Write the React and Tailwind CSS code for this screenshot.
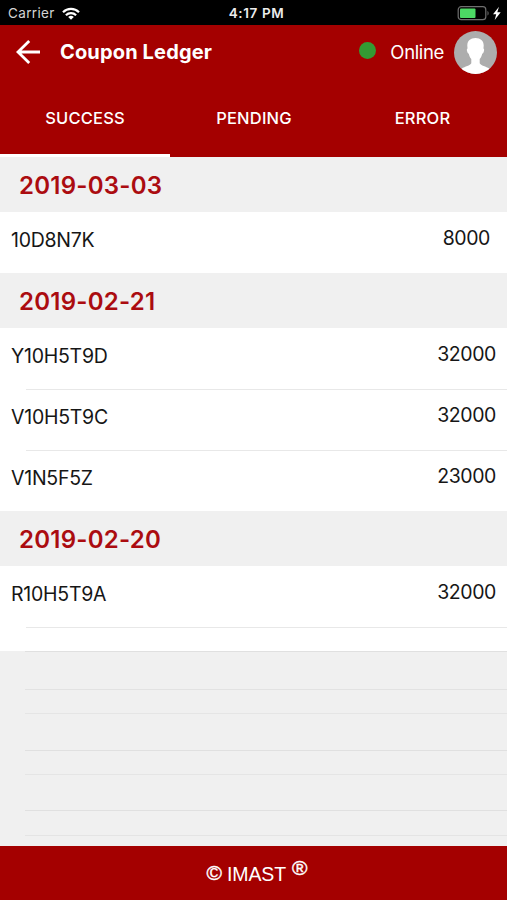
const groups = [
  { date: '2019-03-03', items: [{ code: '10D8N7K', points: 8000 }] },
  {
    date: '2019-02-21',
    items: [
      { code: 'Y10H5T9D', points: 32000 },
      { code: 'V10H5T9C', points: 32000 },
      { code: 'V1N5F5Z', points: 23000 },
    ],
  },
  { date: '2019-02-20', items: [{ code: 'R10H5T9A', points: 32000 }] },
]

const tabs = ['SUCCESS', 'PENDING', 'ERROR']

function StatusBar() {
  return (
    <div className="h-[25px] shrink-0 bg-black text-white grid grid-cols-3 items-center pl-2 pr-1 pt-[3px]">
      <div className="flex items-center gap-[7px]">
        <span className="text-[13.5px] leading-none tracking-[0.35px] text-[#d4d4d4]">Carrier</span>
        <svg width="18" height="13" viewBox="0 0 18 13" fill="none" stroke="#fff" strokeWidth="2.2" className="-mt-0.5">
          <path d="M1 5.200a11.300 11.300 0 0 1 16 0" />
          <path d="M3.900 8.200a7.200 7.200 0 0 1 10.200 0" />
          <path d="M6.200 10a4 4 0 0 1 5.600 0L9 12.800z" fill="#fff" stroke="none" />
        </svg>
      </div>
      <div className="pl-0.5 text-center text-[13.5px] leading-none font-semibold tracking-[0.6px] text-[#ececec]">4:17 PM</div>
      <div className="flex justify-end">
        <svg width="46" height="16" viewBox="0 0 46 16" className="-mt-[3px]">
          <rect x="1.200" y="1.700" width="27.600" height="13" rx="3" fill="none" stroke="#6f6f6f" strokeWidth="1.200" />
          <rect x="3" y="3.500" width="15.500" height="9.400" rx="1" fill="#4cd964" />
          <path d="M30.500 6v4.600c1.500-.6 1.500-4 0-4.600z" fill="#6f6f6f" />
          <path d="M42 1.800l-6 7.400h3.200l-1.500 5.800 6-7.800h-3.400z" fill="#fff" />
        </svg>
      </div>
    </div>
  )
}

function Avatar() {
  return (
    <svg width="43" height="43" viewBox="0 0 43 43">
      <defs>
        <clipPath id="avatar">
          <circle cx="21.500" cy="21.500" r="21.500" />
        </clipPath>
      </defs>
      <g clipPath="url(#avatar)">
        <rect width="43" height="43" fill="#adadad" />
        <path
          fill="#fff"
          d="M21.500 7c-5 0-8.200 2.800-8.200 7.500 0 1.300.2 2.200.3 3-.9.300-.9 1.300-.5 2.800.4 1.500.9 2.400 1.700 2.500.4 2.200 1.300 3.900 2.500 5.200v4.300c-1 2.500-6.500 3.200-9.500 5.200-1.500 1-2.300 3-2.800 5.500h33c-.5-2.500-1.300-4.500-2.800-5.500-3-2-8.500-2.700-9.500-5.200V28c1.200-1.300 2.100-3 2.500-5.200.8-.1 1.300-1 1.700-2.500.4-1.500.4-2.500-.5-2.800.1-.8.300-1.700.3-3C29.700 9.800 26.500 7 21.500 7z"
        />
      </g>
    </svg>
  )
}

function Header() {
  return (
    <header className="h-[132px] shrink-0 bg-[#a40000] text-white flex flex-col">
      <div className="h-[54px] flex items-center pl-[15px] pr-[10px]">
        <svg width="26" height="26" viewBox="0 0 26 26" fill="none" stroke="#fff" strokeWidth="2.800">
          <path d="M14.200 2L3 13l11.200 11M2.500 13h22.500" />
        </svg>
        <h1 className="ml-[19px] text-[20px] font-bold tracking-[0.15px]">Coupon Ledger</h1>
        <span className="ml-auto mb-[4px] size-[17px] rounded-full bg-[#339a33]" />
        <span className="ml-[14px] mr-[10px] pt-px text-[18.500px] tracking-[-0.35px]">Online</span>
        <Avatar />
      </div>
      <nav className="flex-1 grid grid-cols-[170px_168px_169px] text-[16.500px] font-medium tracking-[0.2px]">
        {tabs.map((tab, i) => (
          <div
            key={tab}
            className={
              i === 0
                ? 'flex items-center justify-center border-b-[3px] border-white pt-[3px]'
                : 'flex items-center justify-center border-b-[3px] border-transparent pt-[3px]'
            }
          >
            {tab}
          </div>
        ))}
      </nav>
    </header>
  )
}

function Group({ date, items }) {
  return (
    <section>
      <h2 className="h-[55px] bg-[#f0f0f0] flex items-center pl-[19px] pt-[2px] text-[24px] font-semibold tracking-[0.24px] text-[#ab0c10]">
        {date}
      </h2>
      {items.map((item, i) => (
        <div key={item.code} className="h-[61px] flex flex-col">
          <div className={i > 0 ? 'ml-[26px] h-px bg-[#e8e8e8]' : 'h-px'} />
          <div className="flex-1 flex items-center justify-between pl-[11px] pr-[11px] text-[19.500px] text-[#161616]">
            <span className="mt-[-5px] tracking-[-0.25px]">{item.code}</span>
            <span
              className={
                item.points < 10000 ? 'mt-[-9px] mr-[6px] tracking-[-0.4px]' : 'mt-[-9px] tracking-[-0.4px]'
              }
            >
              {item.points}
            </span>
          </div>
        </div>
      ))}
    </section>
  )
}

export default function App() {
  return (
    <div className="w-[507px] h-[900px] flex flex-col overflow-hidden bg-[#f0f0f0] font-['Inter','Liberation_Sans',sans-serif]">
      <StatusBar />
      <Header />
      <main className="flex-1 min-h-0 bg-[#f0f0f0]">
        <div className="bg-white">
          {groups.map((g) => (
            <Group key={g.date} {...g} />
          ))}
          <div className="ml-[26px] h-px bg-[#e8e8e8]" />
          <div className="h-[23px]" />
        </div>
        {/* separators of the empty rows */}
        <div className="ml-[25px]">
          <div className="h-[38px] border-t border-[#e0e0e0]" />
          <div className="h-[24px] border-t border-[#e2e2e2]" />
          <div className="h-[37px] border-t border-[#e5e5e5]" />
          <div className="h-[24px] border-t border-[#e0e0e0]" />
          <div className="h-[36px] border-t border-[#e5e5e5]" />
          <div className="h-[25px] border-t border-[#e0e0e0]" />
          <div className="border-t border-[#e4e4e4]" />
        </div>
      </main>
      <footer className="h-[54px] pl-[7px] shrink-0 bg-[#a40000] text-white flex items-center justify-center text-[19.500px] font-['Liberation_Sans',sans-serif]">
        <span className="text-[21px] [-webkit-text-stroke:0.4px_white]">©</span>
        <span className="ml-[5px] mt-[3px] tracking-[-0.1px]">IMAST</span>
        <span className="ml-[6px] mb-[10px] text-[21px] [-webkit-text-stroke:0.4px_white]">®</span>
      </footer>
    </div>
  )
}
